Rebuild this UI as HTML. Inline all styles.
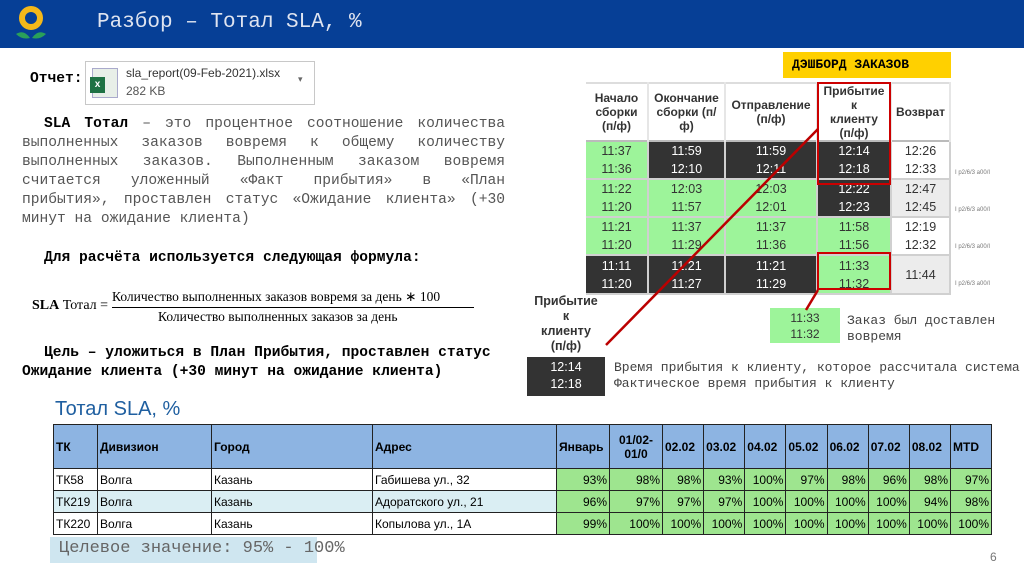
<!DOCTYPE html>
<html><head><meta charset="utf-8"><style>
*{margin:0;padding:0;box-sizing:border-box}
body{width:1024px;height:574px;background:#fff;position:relative;overflow:hidden;font-family:"Liberation Sans","Noto Sans CJK SC",sans-serif}
.a{position:absolute}
.mono{font-family:"Liberation Mono","DejaVu Sans Mono",monospace}
.hdr{left:0;top:0;width:1024px;height:48px;background:#063f96}
.pl{position:absolute;left:22px;width:483px;font-size:14.6px;color:#555;height:19px;line-height:19px;text-align:justify;text-align-last:justify;white-space:nowrap}
.pl.s{text-align-last:left}
table{border-collapse:collapse}
.dash td{text-align:center;font-size:12.5px;line-height:18px;color:#333}
.dash th{font-size:12px;font-weight:bold;color:#333;line-height:14px;border-right:2px solid #e6e6e6;background:#fff}
.g{background:#9df49a}
.d{background:#333;color:#fff!important}
.l{background:#ececec}
.dash td{border-right:2px solid #d0d0d0;border-bottom:2px solid #d0d0d0}
.xt td,.xt th{font-family:"Liberation Sans Narrow","Liberation Sans",sans-serif;font-size:12px;border:1px solid #222;height:22px;padding:0 2px;white-space:nowrap}
.xt th{background:#8db4e2;text-align:left;font-weight:bold;height:44px}
.xt .n{text-align:right;background:#9ee58f}
</style></head><body>
<div class="a hdr"></div>
<svg class="a" style="left:14px;top:4px" width="34" height="38" viewBox="0 0 34 38">
<circle cx="17" cy="14" r="9" fill="none" stroke="#f4b81a" stroke-width="6"/>
<path d="M2 30 Q10 25 16 34 Q8 36 2 30Z" fill="#2aa05a"/><path d="M32 30 Q24 25 18 34 Q26 36 32 30Z" fill="#2aa05a"/></svg>
<div class="a mono" style="left:97px;top:11px;font-size:21px;color:#dfe4f0">Разбор – Тотал SLA, %</div>

<div class="a mono" style="left:30px;top:71px;font-size:14.6px;font-weight:bold">Отчет:</div>
<div class="a" style="left:85px;top:61px;width:230px;height:44px;border:1px solid #c8c8c8"></div>
<div class="a" style="left:92px;top:68px;width:26px;height:30px;background:#e8efe8;border:1px solid #aac"></div>
<div class="a" style="left:90px;top:77px;width:15px;height:16px;background:#1f7244;color:#fff;font-size:10px;font-weight:bold;text-align:center;line-height:16px">x</div>
<div class="a" style="left:126px;top:66px;font-size:12px;color:#333">sla_report(09-Feb-2021).xlsx</div>
<div class="a" style="left:126px;top:84px;font-size:12px;color:#555">282 KB</div>
<div class="a" style="left:298px;top:74px;font-size:9px;color:#666">▾</div>

<div class="pl mono" style="top:115px;left:44px;width:461px"><b style="color:#000">SLA Тотал</b> – это процентное соотношение количества</div>
<div class="pl mono" style="top:134px">выполненных заказов вовремя к общему количеству</div>
<div class="pl mono" style="top:153px">выполненных заказов. Выполненным заказом вовремя</div>
<div class="pl mono" style="top:172px">считается уложенный «Факт прибытия» в «План</div>
<div class="pl mono" style="top:191px">прибытия», проставлен статус «Ожидание клиента» (+30</div>
<div class="pl mono s" style="top:210px">минут на ожидание клиента)</div>

<div class="a mono" style="left:44px;top:250px;font-size:14.6px;font-weight:bold;white-space:nowrap">Для расчёта используется следующая формула:</div>
<div class="a" style="left:32px;top:298px;font-family:'Liberation Serif',serif;font-size:14px"><b>SLA</b> Тотал =</div>
<div class="a" style="left:112px;top:289px;font-family:'Liberation Serif',serif;font-size:13.5px">Количество выполненных заказов вовремя за день ∗ 100</div>
<div class="a" style="left:112px;top:307px;width:362px;border-top:1px solid #000"></div>
<div class="a" style="left:158px;top:309px;font-family:'Liberation Serif',serif;font-size:13.5px">Количество выполненных заказов за день</div>
<div class="a mono" style="left:44px;top:345px;font-size:14.6px;font-weight:bold;white-space:nowrap">Цель – уложиться в План Прибытия, проставлен статус</div>
<div class="a mono" style="left:22px;top:364px;font-size:14.6px;font-weight:bold;white-space:nowrap">Ожидание клиента (+30 минут на ожидание клиента)</div>

<div class="a mono" style="left:783px;top:52px;width:168px;height:26px;background:#ffd000;font-size:13px;font-weight:bold;padding:5px 0 0 9px">ДЭШБОРД ЗАКАЗОВ</div>

<table class="a dash" style="left:586px;top:82px;width:365px">
<tr style="height:58px;border-top:2px solid #ddd;border-bottom:2px solid #bbb"><th style="width:62px">Начало<br>сборки<br>(п/ф)</th><th style="width:77px">Окончание<br>сборки (п/<br>ф)</th><th style="width:92px">Отправление<br>(п/ф)</th><th style="width:74px">Прибытие<br>к<br>клиенту<br>(п/ф)</th><th>Возврат</th></tr>
<tr style="height:37px"><td class="g">11:37<br>11:36</td><td class="d">11:59<br>12:10</td><td class="d">11:59<br>12:11</td><td class="d">12:14<br>12:18</td><td>12:26<br>12:33</td></tr>
<tr style="height:37px"><td class="g">11:22<br>11:20</td><td class="g">12:03<br>11:57</td><td class="g">12:03<br>12:01</td><td class="d">12:22<br>12:23</td><td class="l">12:47<br>12:45</td></tr>
<tr style="height:37px"><td class="g">11:21<br>11:20</td><td class="g">11:37<br>11:29</td><td class="g">11:37<br>11:36</td><td class="g">11:58<br>11:56</td><td>12:19<br>12:32</td></tr>
<tr style="height:39px"><td class="d">11:11<br>11:20</td><td class="d">11:21<br>11:27</td><td class="d">11:21<br>11:29</td><td class="g">11:33<br>11:32</td><td class="l">11:44</td></tr>
</table>
<div class="a" style="left:817px;top:82px;width:74px;height:103px;border:2px solid #c00"></div>
<div class="a" style="left:817px;top:252px;width:74px;height:38px;border:2px solid #c00"></div>
<div class="a" style="left:955px;top:155px;font-size:6px;color:#777;line-height:37px">I p2/6/3 a00/I<br>I p2/6/3 a00/I<br>I p2/6/3 a00/I<br>I p2/6/3 a00/I</div>

<div class="a" style="left:770px;top:308px;width:70px;height:35px;background:#9df49a;text-align:center;font-size:12px;line-height:16px;color:#333;padding-top:2px">11:33<br>11:32</div>
<div class="a mono" style="left:847px;top:313px;font-size:13px;color:#444;line-height:16px;white-space:nowrap">Заказ был доставлен<br>вовремя</div>
<div class="a" style="left:527px;top:294px;width:78px;text-align:center;font-size:12.5px;font-weight:bold;color:#333;line-height:15px">Прибытие<br>к<br>клиенту<br>(п/ф)</div>
<div class="a" style="left:527px;top:357px;width:78px;height:39px;background:#333;color:#fff;text-align:center;font-size:12.5px;line-height:17px;padding-top:2px">12:14<br>12:18</div>
<div class="a mono" style="left:614px;top:360px;font-size:13px;color:#444;line-height:15.5px;white-space:nowrap">Время прибытия к клиенту, которое рассчитала система<br>Фактическое время прибытия к клиенту</div>
<svg class="a" style="left:0;top:0" width="1024" height="574"><line x1="818" y1="129" x2="606" y2="345" stroke="#b00" stroke-width="2.5"/><line x1="818" y1="290" x2="806" y2="310" stroke="#b00" stroke-width="2.5"/></svg>

<div class="a" style="left:55px;top:398px;font-size:20px;color:#1f5fa0;font-family:'Liberation Sans Narrow','Liberation Sans',sans-serif">Тотал SLA, %</div>
<table class="a xt" style="left:53px;top:424px;width:939px">
<tr><th style="width:44px">ТК</th><th style="width:114px">Дивизион</th><th style="width:161px">Город</th><th style="width:184px">Адрес</th><th style="width:53px">Январь</th><th style="width:53px;text-align:center">01/02-<br>01/0</th><th>02.02</th><th>03.02</th><th>04.02</th><th>05.02</th><th>06.02</th><th>07.02</th><th>08.02</th><th style="width:41px">MTD</th></tr>
<tr><td>ТК58</td><td>Волга</td><td>Казань</td><td>Габишева ул., 32</td><td class="n">93%</td><td class="n">98%</td><td class="n">98%</td><td class="n">93%</td><td class="n">100%</td><td class="n">97%</td><td class="n">98%</td><td class="n">96%</td><td class="n">98%</td><td class="n">97%</td></tr>
<tr style="background:#daeef3"><td>ТК219</td><td>Волга</td><td>Казань</td><td>Адоратского ул., 21</td><td class="n">96%</td><td class="n">97%</td><td class="n">97%</td><td class="n">97%</td><td class="n">100%</td><td class="n">100%</td><td class="n">100%</td><td class="n">100%</td><td class="n">94%</td><td class="n">98%</td></tr>
<tr><td>ТК220</td><td>Волга</td><td>Казань</td><td>Копылова ул., 1А</td><td class="n">99%</td><td class="n">100%</td><td class="n">100%</td><td class="n">100%</td><td class="n">100%</td><td class="n">100%</td><td class="n">100%</td><td class="n">100%</td><td class="n">100%</td><td class="n">100%</td></tr>
</table>
<div class="a" style="left:50px;top:537px;width:267px;height:26px;background:#cfe6f0"></div>
<div class="a mono" style="left:59px;top:539px;font-size:17px;color:#666;white-space:nowrap">Целевое значение: 95% - 100%</div>
<div class="a" style="left:990px;top:550px;font-size:12px;color:#777">6</div>
</body></html>
